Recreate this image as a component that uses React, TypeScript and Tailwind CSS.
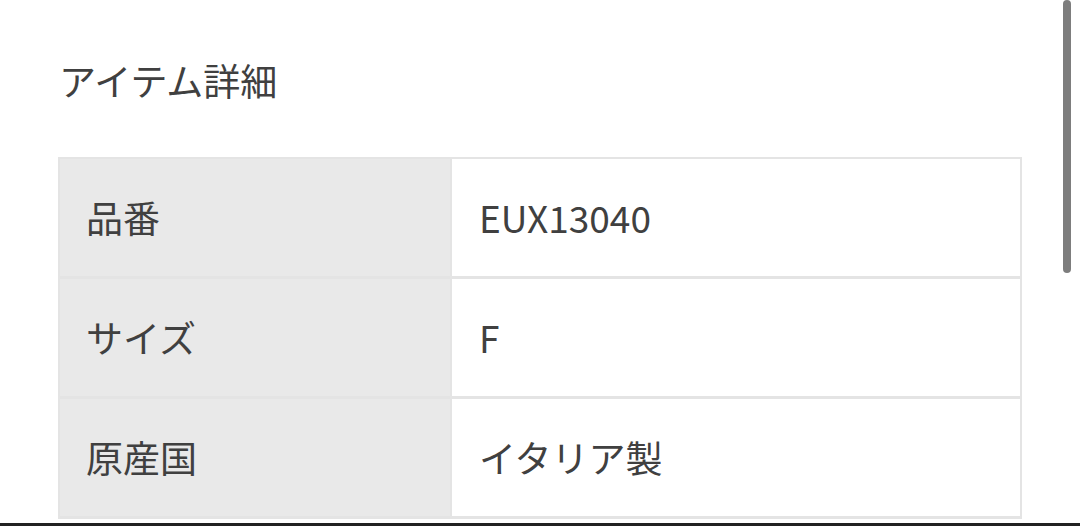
import React from 'react'

const rows = [
  { label: '品番', value: 'EUX13040' },
  { label: 'サイズ', value: 'F' },
  { label: '原産国', value: 'イタリア製' },
]

export default function App() {
  return (
    <div
      className="relative flex h-[526px] w-[1080px] flex-col overflow-hidden bg-white text-[#404040]"
      style={{ fontFamily: '"Noto Sans CJK JP", "Noto Sans", sans-serif' }}
    >
      <div className="flex-1 pl-[58px] pt-[53px]">
        <h2 className="pl-[1px] text-[37px] leading-[54px] font-normal">アイテム詳細</h2>
        <div className="mt-[50px] w-[964px] border-x-2 border-t-2 border-[#e4e4e4]">
          {rows.map((r) => (
            <div
              key={r.label}
              className="grid h-[120px] grid-cols-[392px_1fr] border-b-[3px] border-[#e4e4e4]"
            >
              <div className="flex items-center border-r-2 border-[#e4e4e4] bg-[#e9e9e9] pl-[26px] pt-[1px] text-[37px]">
                {r.label}
              </div>
              <div className="flex items-center bg-white pl-[27px] pt-[1px] text-[37px]">{r.value}</div>
            </div>
          ))}
        </div>
      </div>
      <div className="h-[3px] bg-[#222]" />
      <div className="absolute right-[9px] top-0 h-[273px] w-[8px] rounded-full bg-[#7d7d7d]" />
    </div>
  )
}
